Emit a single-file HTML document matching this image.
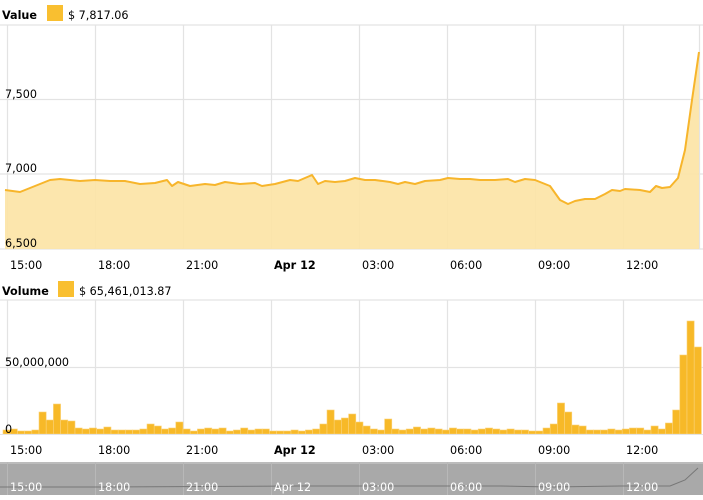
<!DOCTYPE html>
<html><head><meta charset="utf-8"><style>
html,body{margin:0;padding:0;background:#fff;width:703px;height:500px;overflow:hidden;font-family:Verdana,"DejaVu Sans",sans-serif}
svg{position:absolute;left:0;top:0}
text{font-family:Verdana,"DejaVu Sans",sans-serif;font-size:11.2px;fill:#000}
text.w{fill:#fff}
</style></head><body>
<svg width="703" height="500" viewBox="0 0 703 500">
<g stroke="#e3e3e3" stroke-width="1.2">
<line x1="0" y1="25" x2="703" y2="25"/><line x1="0" y1="99.5" x2="703" y2="99.5"/><line x1="0" y1="174" x2="703" y2="174"/><line x1="0" y1="249" x2="703" y2="249"/>
<line x1="7.5" y1="25" x2="7.5" y2="249"/><line x1="95.5" y1="25" x2="95.5" y2="249"/><line x1="183.5" y1="25" x2="183.5" y2="249"/><line x1="271.5" y1="25" x2="271.5" y2="249"/><line x1="359.5" y1="25" x2="359.5" y2="249"/><line x1="447.5" y1="25" x2="447.5" y2="249"/><line x1="535.5" y1="25" x2="535.5" y2="249"/><line x1="623.5" y1="25" x2="623.5" y2="249"/><line x1="699.5" y1="25" x2="699.5" y2="249"/>
</g>
<polygon fill="#fce3a4" fill-opacity="0.9" points="5,249 5,190 20,192 35,186 50,180 60,179 80,181 95,180 110,181 125,181 140,184 155,183 167,180 172,186 178,182 190,186 205,184 215,185 225,182 240,184 255,183 262,186 275,184 290,180 298,181 305,178 312,175 318,184 325,181 335,182 345,181 355,178 365,180 375,180 390,182 398,184 405,182 415,184 425,181 440,180 448,178 460,179 470,179 480,180 495,180 508,179 515,182 525,179 535,180 550,186 560,200 568,204 575,201 585,199 595,199 605,194 612,190 620,191 625,189 640,190 650,192 656,186 662,188 670,187 678,178 685,150 692,100 699,52 699,249"/>
<polyline fill="none" stroke="#f7b52b" stroke-width="2" stroke-linejoin="round" points="5,190 20,192 35,186 50,180 60,179 80,181 95,180 110,181 125,181 140,184 155,183 167,180 172,186 178,182 190,186 205,184 215,185 225,182 240,184 255,183 262,186 275,184 290,180 298,181 305,178 312,175 318,184 325,181 335,182 345,181 355,178 365,180 375,180 390,182 398,184 405,182 415,184 425,181 440,180 448,178 460,179 470,179 480,180 495,180 508,179 515,182 525,179 535,180 550,186 560,200 568,204 575,201 585,199 595,199 605,194 612,190 620,191 625,189 640,190 650,192 656,186 662,188 670,187 678,178 685,150 692,100 699,52"/>
<text x="5" y="98">7,500</text><text x="5" y="172">7,000</text><text x="5" y="247">6,500</text>
<g><text x="10" y="269">15:00</text><text x="98" y="269">18:00</text><text x="186" y="269">21:00</text><text x="274" y="269" font-weight="bold">Apr 12</text><text x="362" y="269">03:00</text><text x="450" y="269">06:00</text><text x="538" y="269">09:00</text><text x="626" y="269">12:00</text></g>
<text x="2" y="19" font-weight="bold">Value</text>
<rect x="47" y="5" width="16" height="16" fill="#f9bf30"/>
<text x="68" y="19">$ 7,817.06</text>
<text x="2" y="295" font-weight="bold">Volume</text>
<rect x="58" y="281" width="16" height="16" fill="#f9bf30"/>
<text x="79" y="295">$ 65,461,013.87</text>
<g stroke="#e3e3e3" stroke-width="1.2">
<line x1="0" y1="300" x2="703" y2="300"/><line x1="0" y1="367.5" x2="703" y2="367.5"/>
<line x1="7.5" y1="300" x2="7.5" y2="434"/><line x1="95.5" y1="300" x2="95.5" y2="434"/><line x1="183.5" y1="300" x2="183.5" y2="434"/><line x1="271.5" y1="300" x2="271.5" y2="434"/><line x1="359.5" y1="300" x2="359.5" y2="434"/><line x1="447.5" y1="300" x2="447.5" y2="434"/><line x1="535.5" y1="300" x2="535.5" y2="434"/><line x1="623.5" y1="300" x2="623.5" y2="434"/>
</g>
<text x="5" y="366">50,000,000</text>
<g fill="#f7b928" stroke="#fbd27a" stroke-width="0.6">
<rect x="3" y="430" width="7.2" height="4"/><rect x="10.2" y="429" width="7.2" height="5"/><rect x="17.4" y="431" width="7.2" height="3"/><rect x="24.6" y="431" width="7.2" height="3"/><rect x="31.8" y="430" width="7.2" height="4"/><rect x="39" y="412" width="7.2" height="22"/><rect x="46.2" y="420" width="7.2" height="14"/><rect x="53.4" y="404" width="7.2" height="30"/><rect x="60.6" y="420" width="7.2" height="14"/><rect x="67.8" y="421" width="7.2" height="13"/><rect x="75" y="428" width="7.2" height="6"/><rect x="82.2" y="429" width="7.2" height="5"/><rect x="89.4" y="428" width="7.2" height="6"/><rect x="96.6" y="429" width="7.2" height="5"/><rect x="103.8" y="427" width="7.2" height="7"/><rect x="111" y="430" width="7.2" height="4"/><rect x="118.2" y="430" width="7.2" height="4"/><rect x="125.4" y="430" width="7.2" height="4"/><rect x="132.6" y="430" width="7.2" height="4"/><rect x="139.8" y="429" width="7.2" height="5"/><rect x="147" y="424" width="7.2" height="10"/><rect x="154.2" y="426" width="7.2" height="8"/><rect x="161.4" y="429" width="7.2" height="5"/><rect x="168.6" y="428" width="7.2" height="6"/><rect x="175.8" y="422" width="7.2" height="12"/><rect x="183" y="429" width="7.2" height="5"/><rect x="190.2" y="431" width="7.2" height="3"/><rect x="197.4" y="429" width="7.2" height="5"/><rect x="204.6" y="428" width="7.2" height="6"/><rect x="211.8" y="429" width="7.2" height="5"/><rect x="219" y="428" width="7.2" height="6"/><rect x="226.2" y="431" width="7.2" height="3"/><rect x="233.4" y="430" width="7.2" height="4"/><rect x="240.6" y="428" width="7.2" height="6"/><rect x="247.8" y="430" width="7.2" height="4"/><rect x="255" y="429" width="7.2" height="5"/><rect x="262.2" y="429" width="7.2" height="5"/><rect x="269.4" y="431" width="7.2" height="3"/><rect x="276.6" y="431" width="7.2" height="3"/><rect x="283.8" y="431" width="7.2" height="3"/><rect x="291" y="430" width="7.2" height="4"/><rect x="298.2" y="431" width="7.2" height="3"/><rect x="305.4" y="430" width="7.2" height="4"/><rect x="312.6" y="429" width="7.2" height="5"/><rect x="319.8" y="424" width="7.2" height="10"/><rect x="327" y="410" width="7.2" height="24"/><rect x="334.2" y="420" width="7.2" height="14"/><rect x="341.4" y="418" width="7.2" height="16"/><rect x="348.6" y="414" width="7.2" height="20"/><rect x="355.8" y="422" width="7.2" height="12"/><rect x="363" y="426" width="7.2" height="8"/><rect x="370.2" y="429" width="7.2" height="5"/><rect x="377.4" y="430" width="7.2" height="4"/><rect x="384.6" y="419" width="7.2" height="15"/><rect x="391.8" y="429" width="7.2" height="5"/><rect x="399" y="430" width="7.2" height="4"/><rect x="406.2" y="429" width="7.2" height="5"/><rect x="413.4" y="427" width="7.2" height="7"/><rect x="420.6" y="429" width="7.2" height="5"/><rect x="427.8" y="428" width="7.2" height="6"/><rect x="435" y="429" width="7.2" height="5"/><rect x="442.2" y="430" width="7.2" height="4"/><rect x="449.4" y="428" width="7.2" height="6"/><rect x="456.6" y="429" width="7.2" height="5"/><rect x="463.8" y="429" width="7.2" height="5"/><rect x="471" y="430" width="7.2" height="4"/><rect x="478.2" y="429" width="7.2" height="5"/><rect x="485.4" y="428" width="7.2" height="6"/><rect x="492.6" y="429" width="7.2" height="5"/><rect x="499.8" y="430" width="7.2" height="4"/><rect x="507" y="429" width="7.2" height="5"/><rect x="514.2" y="430" width="7.2" height="4"/><rect x="521.4" y="430" width="7.2" height="4"/><rect x="528.6" y="431" width="7.2" height="3"/><rect x="535.8" y="431" width="7.2" height="3"/><rect x="543" y="428" width="7.2" height="6"/><rect x="550.2" y="424" width="7.2" height="10"/><rect x="557.4" y="403" width="7.2" height="31"/><rect x="564.6" y="412" width="7.2" height="22"/><rect x="571.8" y="425" width="7.2" height="9"/><rect x="579" y="426" width="7.2" height="8"/><rect x="586.2" y="430" width="7.2" height="4"/><rect x="593.4" y="430" width="7.2" height="4"/><rect x="600.6" y="430" width="7.2" height="4"/><rect x="607.8" y="429" width="7.2" height="5"/><rect x="615" y="430" width="7.2" height="4"/><rect x="622.2" y="429" width="7.2" height="5"/><rect x="629.4" y="428" width="7.2" height="6"/><rect x="636.6" y="428" width="7.2" height="6"/><rect x="643.8" y="430" width="7.2" height="4"/><rect x="651" y="426" width="7.2" height="8"/><rect x="658.2" y="429" width="7.2" height="5"/><rect x="665.4" y="423" width="7.2" height="11"/><rect x="672.6" y="410" width="7.2" height="24"/><rect x="679.8" y="355" width="7.2" height="79"/><rect x="687" y="321" width="7.2" height="113"/><rect x="694.2" y="347" width="7.2" height="87"/>
</g>
<text x="5" y="433">0</text>
<line x1="0" y1="434.5" x2="703" y2="434.5" stroke="#e3e3e3"/>
<g><text x="10" y="454">15:00</text><text x="98" y="454">18:00</text><text x="186" y="454">21:00</text><text x="274" y="454" font-weight="bold">Apr 12</text><text x="362" y="454">03:00</text><text x="450" y="454">06:00</text><text x="538" y="454">09:00</text><text x="626" y="454">12:00</text></g>
<rect x="0" y="462" width="703" height="33" fill="#a9a9a9"/>
<rect x="0" y="462" width="703" height="2" fill="#bcbcbc"/>
<g stroke="#b8b8b8" stroke-width="1"><line x1="7.5" y1="462" x2="7.5" y2="495"/><line x1="95.5" y1="462" x2="95.5" y2="495"/><line x1="183.5" y1="462" x2="183.5" y2="495"/><line x1="271.5" y1="462" x2="271.5" y2="495"/><line x1="359.5" y1="462" x2="359.5" y2="495"/><line x1="447.5" y1="462" x2="447.5" y2="495"/><line x1="535.5" y1="462" x2="535.5" y2="495"/><line x1="623.5" y1="462" x2="623.5" y2="495"/></g>
<polyline fill="none" stroke="#777" stroke-width="1" points="0,487 100,487 300,486 500,486 550,487 620,486 670,486 685,480 698,468"/>
<g><text class="w" x="10" y="491">15:00</text><text class="w" x="98" y="491">18:00</text><text class="w" x="186" y="491">21:00</text><text class="w" x="274" y="491">Apr 12</text><text class="w" x="362" y="491">03:00</text><text class="w" x="450" y="491">06:00</text><text class="w" x="538" y="491">09:00</text><text class="w" x="626" y="491">12:00</text></g>
</svg>
</body></html>
